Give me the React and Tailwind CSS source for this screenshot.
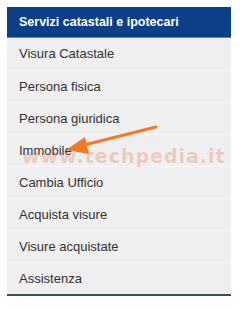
import React from 'react';

const items = [
  'Visura Catastale',
  'Persona fisica',
  'Persona giuridica',
  'Immobile',
  'Cambia Ufficio',
  'Acquista visure',
  'Visure acquistate',
  'Assistenza',
];

export default function App() {
  return (
    <div className="relative w-[240px] h-[310px] bg-white pt-[7px] pl-[7px] font-['Liberation_Sans',Arial,sans-serif]">
      <div className="w-[224px] border-b-2 border-[#34504f]">
        <div className="h-[31px] bg-[#0b3f86] flex items-center pl-[12px] text-white text-[12.5px] font-bold border-b border-[#5f86b8]">
          Servizi catastali e ipotecari
        </div>
        {items.map((t, i) => (
          <div
            key={t}
            className={`h-[32px] bg-[#efefef] flex items-center pl-[12px] text-[13px] text-[#333] ${i > 0 ? 'border-t border-[#f8f8f8]' : ''}`}
          >
            {t}
          </div>
        ))}
      </div>

      {/* watermark */}
      <span className="absolute left-[22px] top-[147px] text-[19px] leading-none font-bold tracking-[1px] text-[#e0603a]/25 pointer-events-none font-['DejaVu_Sans',Verdana,sans-serif]">
        www.techpedia.it
      </span>

      {/* arrow */}
      <svg className="absolute left-0 top-0 pointer-events-none" width="240" height="310">
        <line x1="156" y1="127" x2="84" y2="145" stroke="#f07a2a" strokeWidth="3" strokeLinecap="round" />
        <polygon points="66,150 85,137 89,154" fill="#f07a2a" />
      </svg>
    </div>
  );
}
